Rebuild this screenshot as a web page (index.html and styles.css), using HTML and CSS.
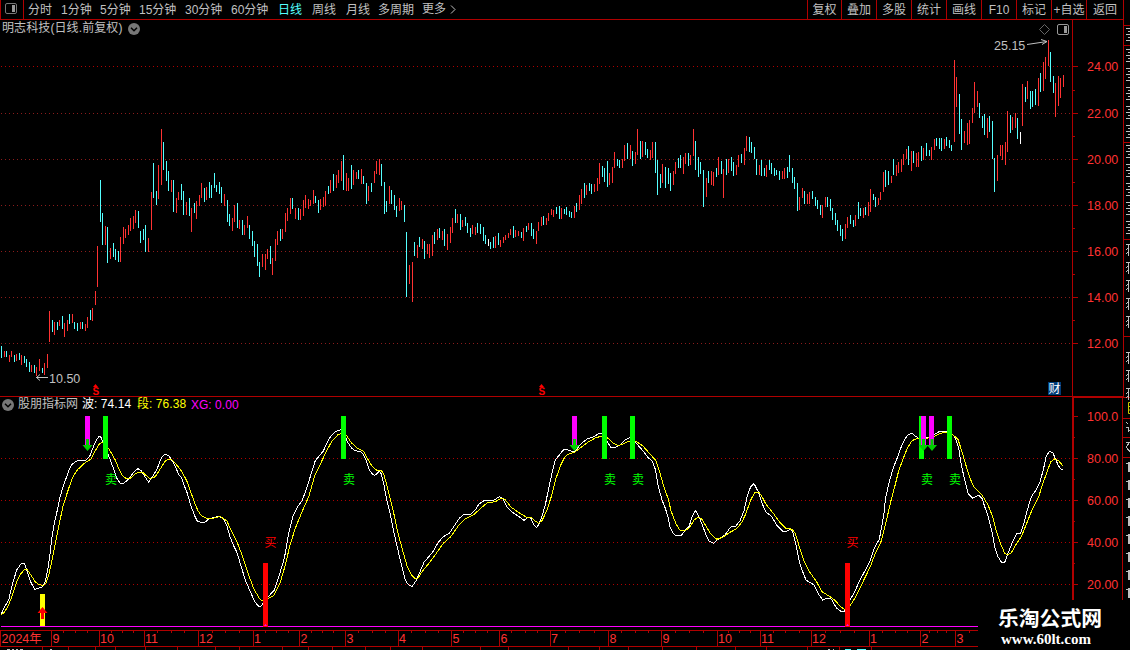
FILE: index.html
```
<!DOCTYPE html>
<html lang="zh-CN">
<head>
    <meta charset="UTF-8">
    <meta name="viewport" content="width=device-width, initial-scale=1.0">
    <title>明志科技 日线</title>
    <link rel="stylesheet" href="styles.css">
</head>
<body>
    <div class="terminal">
        <div class="workspace">
            <nav class="toolbar">
                <button class="panel-toggle" aria-label="panel">
                    <svg width="12" height="11" viewBox="0 0 12 11">
                        <rect x="0.5" y="0.5" width="11" height="10" rx="1.5" fill="none" stroke="#777"/>
                        <rect x="7" y="2" width="3" height="7" fill="#999"/>
                    </svg>
                </button>
                <div class="periods">
                    <span>分时</span>
                    <span>1分钟</span>
                    <span>5分钟</span>
                    <span>15分钟</span>
                    <span>30分钟</span>
                    <span>60分钟</span>
                    <span class="active">日线</span>
                    <span>周线</span>
                    <span>月线</span>
                    <span>多周期</span>
                    <span class="more">更多
                        <svg width="6" height="9" viewBox="0 0 6 9"><path d="M1 0.5L5 4.5L1 8.5" fill="none" stroke="#c0c0c0"/></svg>
                    </span>
                </div>
                <div class="tools">
                    <span>复权</span>
                    <span>叠加</span>
                    <span>多股</span>
                    <span>统计</span>
                    <span>画线</span>
                    <span>F10</span>
                    <span>标记</span>
                    <span>+自选</span>
                    <span>返回</span>
                </div>
            </nav>

            <!-- Price pane -->
            <section class="pane price-pane">
                <div class="pane-title">
                    <span class="stock-name">明志科技(日线.前复权)</span>
                    <svg class="chevron" width="12" height="12" viewBox="0 0 12 12">
                        <circle cx="6" cy="6" r="6" fill="#777"/>
                        <path d="M3 4.8L6 7.8L9 4.8" fill="none" stroke="#000" stroke-width="1.5"/>
                    </svg>
                </div>
                <svg class="chart" width="1123" height="376" viewBox="0 20 1123 376">
                    <g class="grid dim">
                        <path class="bright" d="M1 66.5H1070"/>
                        <path d="M1 113.5H1070M1 159.5H1070M1 205.5H1070M1 251.5H1070M1 297.5H1070M1 343.5H1070"/>
                    </g>
                    <path class="axis" d="M1072.5 20V396M1073 66.5H1078M1073 113.5H1078M1073 159.5H1078M1073 205.5H1078M1073 251.5H1078M1073 297.5H1078M1073 343.5H1078M1073 90.5H1075M1073 136.5H1075M1073 182.5H1075M1073 228.5H1075M1073 274.5H1075M1073 320.5H1075"/>
                    <g class="axis-label">
                        <text x="1087" y="71">24.00</text>
                        <text x="1087" y="118">22.00</text>
                        <text x="1087" y="164">20.00</text>
                        <text x="1087" y="210">18.00</text>
                        <text x="1087" y="256">16.00</text>
                        <text x="1087" y="302">14.00</text>
                        <text x="1087" y="348">12.00</text>
                    </g>
                    <path id="bars-up" class="bar up"/>
                    <path id="bars-down" class="bar down"/>
                    <path id="bars-flat" class="bar flat"/>

                    <!-- High / low marks -->
                    <text class="mark" x="994" y="50">25.15</text>
                    <path class="arrow" d="M1027 44.5L1047 41.5M1041 39.5L1047 41.5L1042 44.5"/>
                    <text class="mark" x="49" y="383">10.50</text>
                    <path class="arrow" d="M36 377.5H48M40 374.5L36.5 377.5L40 380.5"/>

                    <path d="M1044.5 24.5L1049.5 29.5L1044.5 34.5L1039.5 29.5Z" fill="none" stroke="#666"/>
                    <rect x="1057.5" y="24.5" width="11" height="10" rx="1.5" fill="none" stroke="#999"/>
                    <rect x="1064" y="26" width="3" height="7" fill="#999"/>

                    <g class="dividend">
                        <path d="M93 387L95.5 384L98 387Z"/>
                        <text x="92.5" y="394.5">S</text>
                        <path d="M539 387L541.5 384L544 387Z"/>
                        <text x="538.5" y="394.5">S</text>
                    </g>
                    <rect x="1048" y="382" width="13" height="13" fill="#003c78"/>
                    <text class="badge" x="1048.5" y="393">财</text>
                </svg>
            </section>

            <!-- Indicator pane -->
            <section class="pane indicator-pane">
                <div class="pane-title">
                    <svg class="chevron" width="12" height="12" viewBox="0 0 12 12">
                        <circle cx="6" cy="6" r="6" fill="#777"/>
                        <path d="M3 4.8L6 7.8L9 4.8" fill="none" stroke="#000" stroke-width="1.5"/>
                    </svg>
                    <span class="ind-name">股朋指标网</span>
                    <span class="ind-wave">波: <b>74.14</b></span>
                    <span class="ind-seg">段: <b>76.38</b></span>
                    <span class="ind-xg">XG: <b>0.00</b></span>
                </div>
                <svg class="chart" width="1123" height="254" viewBox="0 396 1123 254">
                    <g class="grid">
                        <path d="M1 458.5H1070M1 500.5H1070M1 542.5H1070M1 584.5H1070"/>
                    </g>
                    <path class="axis" d="M0 396.5H1123M1073 416.5H1078M1073 458.5H1078M1073 500.5H1078M1073 542.5H1078M1073 584.5H1078M1073 437.5H1075M1073 479.5H1075M1073 521.5H1075M1073 563.5H1075"/>
                    <path class="axis heavy" d="M1073 600V397H1123V600"/>
                    <g class="axis-label">
                        <text x="1087" y="421">100.0</text>
                        <text x="1087" y="463">80.00</text>
                        <text x="1087" y="505">60.00</text>
                        <text x="1087" y="547">40.00</text>
                        <text x="1087" y="589">20.00</text>
                    </g>

                    <path class="base" d="M1 626.5H980"/>

                    <polyline class="line wave" points="1.3,614 4,608 8.7,600 12.7,583 16.7,570 20.7,564.3 22.7,563.3 24.7,563.7 26.7,570 30.7,582 34.7,589.3 37.3,588.7 42.7,586.7 45.3,581.7 48,568 50,554 52,537 54.3,523 56.7,513 60,497 64,484 68.7,471 72,464.3 76,461.3 80,460.3 86,460.3 90,455.7 93.3,447 96.7,439.3 99,436.7 100.7,436.7 103.3,442.7 110,459.3 114,470 116.7,478 120,483 122.7,483.7 126.7,481 130.7,476.3 134.7,471 138,468.7 141.3,470.7 145.3,477.3 148.7,482.3 152,477.3 156.7,470 160.7,459.3 163.3,455.3 166,454.3 169.3,456.3 172.7,461.7 176,468.3 179.3,475.7 181.3,477.3 184,485 187.3,493.3 190.7,505 194.7,516 197.3,521 201.3,522.7 204.7,522.3 209.3,518.7 213.3,517.7 219.3,516 223.3,519 226.7,525 230,536.7 233.3,545 237.3,553.3 240.7,565 245.3,580 250,591 254.7,601.7 259.3,607 261.3,606 266.7,598.3 270.7,594 274,590.7 280,572.7 283.3,561.7 285.3,553.3 288,536.7 290.7,525 293.3,515 297.3,507.3 302,501 306.7,488.3 311.3,473.3 315.3,460.7 318.7,456.7 323.3,451 329.3,438.3 334,432.7 338.7,430.3 342.7,429.3 344,432.7 347.3,441.7 351.3,447.7 354.7,450.7 360,451.3 362.7,453.3 366,460 369.3,470 372.7,474.3 374.7,475.3 376.7,474 379.3,471 381.3,474 384,485 386.7,500 390,513.3 392.7,526.7 396,541.7 398.7,553.3 402,566.7 405.3,580 407.3,583.7 412,586.7 416,580.7 420,571.7 424,562.3 428,557.7 433.3,551.3 438,542.7 443.3,536.7 449.3,533.3 454.7,525.3 459.3,518.3 463.3,514.7 470.7,514 474.7,510.7 479.3,503.7 484,500.7 492,500.7 495.3,499.3 499.3,496.7 502.7,498.7 507.3,507.3 512,512 518,516 524,520.3 528,517.3 530.7,518 534,524.7 536.3,527.7 538.7,524.7 542,516 545.3,505 548.7,488.3 552,473.3 555.3,460 559.3,455 563.3,450 566,449.3 572,451.3 575.3,451.3 580.7,444 587.3,439 593.3,437 599.3,433.3 602.7,433.7 607.3,441.7 610.7,447.3 615.3,447.3 620.7,444.7 624.7,440.3 630,437.3 634,440.7 638.7,446 644,452 648,457.7 652,460.7 655.3,469.3 658,485 662,500 665.3,508.3 668,516.7 670,526.7 673.3,533.3 676,535.7 680.7,536 684.7,531 689.3,526 692,516.7 695.3,510.3 698.7,516 702,524 706,535 709.3,541.3 714,543.3 718,539.3 724.7,535.3 730.7,527 736,526 740,520.7 744,510.7 747.3,496 750.7,486.7 754,483.7 758,491.3 762,503.3 766,512 771.3,516 777.3,526 783.3,532 786.7,531.3 790,529.3 792.7,531.3 796,545 799.3,561.7 802,570 806,580 814,585 818.7,594.3 822.7,600 826.7,598.3 831.3,599 836.7,608.3 842,612 845.3,610.7 850,600 854.7,591.7 860,580 869.3,562.7 874.7,547.3 879.3,539.3 882,525 884,513.3 885.3,500 888,486.7 890.7,476.7 894,466 898,456 901.3,446.7 905.3,438.3 908.7,434.3 912,433.3 915.3,436 920,439.3 930,437.3 934.7,434 940,431.3 946.7,431.3 951.3,433.3 955.3,437.7 958.7,448.3 961.3,465 964.7,480 968,493.3 972.7,498.3 978.7,495.3 982,498.3 985.3,508.3 988.7,518.3 992,531.7 994.7,546.7 998,556.7 1002,563 1004.7,562.3 1008,553.3 1012.7,541.7 1016.7,533.7 1020.7,533.3 1024,523.3 1027.3,510 1031.3,496.7 1036,490 1040,481.7 1043.3,470 1046,456.7 1049.3,451.3 1052.7,452.7 1055.3,458.3 1058,465 1060.7,469 1062.7,469.7"/>
                    <polyline class="line segment" points="1.3,614.3 4,612.7 8.7,605 12.7,594 16.7,581.7 20.7,574 24,570 27.3,569.7 32,576.7 35.3,582 39.3,584.7 43.3,585.3 46,583.3 49.3,572.7 52.7,556.7 56,540 59.3,523.3 63.3,505 68.7,488.3 72.7,477.3 77.3,470 82.7,464.7 87.3,461.3 90.7,459.3 94.7,451.7 99.3,444 102.7,442 105.3,443.3 110.7,452 115.3,460 119.3,470 122.7,476 126.7,478.7 130.7,478 134.7,474.3 138.7,472.3 142.7,472.3 146.7,476 150,478.7 155.3,476.7 160,469.3 164.7,461.7 168,459 172,459.7 176.7,465 181.3,470.7 186.7,480.7 190.7,491.7 194.7,503.3 198,510.7 201.3,515.7 206.7,518.3 212,518.7 220,516.3 226.7,520.7 231.3,530.7 237.3,542.7 242.7,556.7 248,573.3 254,589.3 260,599.3 263.3,601.3 266.7,599 273.3,596 276.7,590 280,583.3 285.3,565 290,545 295.3,528.3 302,511.7 308.7,496.7 314.7,476 320.7,463.3 326.7,450.7 332,441 338,434.7 343.3,433 346.7,435.7 351.3,442.7 356.7,447.7 363.3,451 367.3,458.3 372,466 376.7,470.3 381.3,470.3 384,474.7 388,490 392.7,508.3 397.3,530 402,548.3 407.3,566.7 412,575.7 415.3,578.7 418,578 422.7,570.7 428.7,563.7 435.3,554.7 443.3,543.3 450.7,536.7 458.7,525.3 465.3,518.7 473.3,515 480.7,508.3 487.3,502.7 495.3,501.7 501.3,498.3 504.7,499.3 511.3,507.3 520,513.3 526,517 531.3,517.3 535.3,521 538.7,523.3 542,520.7 546.7,510.7 551.3,496.7 556,478.3 560.7,465 564.7,457.3 567.3,454.7 574.7,452 581.3,447.3 588.7,441.7 595.3,438 602.7,435.7 608,438.3 613.3,443.3 618,445.7 623.3,444 628.7,441 635.3,441 642.7,445.7 649.3,453.3 656,460.7 659.3,470.7 663.3,485 668,498.3 671.3,511.7 676,524 680,530.3 684,531 689.3,528 694,520 698,517.3 701.3,518.3 706,526 710.7,534 716.7,539.3 722.7,537.3 730,532.3 736.7,528.7 742,522 746,513.3 750.7,500 754.7,492.7 758.7,492 762,496.7 766,504.3 773.3,513.3 780,522.7 785.3,528 792,529.3 795.3,533.3 799.3,546.7 804.7,562.7 809.3,571.7 816,580.7 822,591.7 830,596.7 835.3,600.7 840.7,606.7 844.7,609.7 850,606 856.7,595 863.3,581 870,567.3 875.3,553.3 880.7,542.7 884,530 887.3,516.7 890.7,501.7 894.7,486.7 898.7,470.7 903.3,458.3 907.3,448.3 912,440.7 917.3,438.3 927.3,438.3 934.7,436 943.3,432.3 951.3,433.3 958,439.3 962,451.7 965.3,463.3 970,478.3 974,487.3 982,495 988,505 992.7,516.7 996,530 1000.7,544 1004.7,553.3 1008,554.7 1011.3,552.7 1016.7,543.3 1021.3,536.7 1026.7,523.3 1032,510 1038.7,496.7 1042.7,484 1046.7,472.7 1050.7,462 1054.7,458.7 1058.7,460.7 1062.7,465.7"/>

                    <!-- Signal columns -->
                    <path fill="#ff0" d="M40 594h5v32h-5z"/>
                    <path fill="#f00" d="M263 563h5v64h-5zM845 563h5v64h-5z"/>
                    <path fill="#0f0" d="M103 416h5v43h-5zM341 416h5v43h-5zM602 416h5v43h-5zM630 416h5v43h-5zM919 416h5v43h-5zM947 416h5v43h-5z"/>
                    <path fill="#f0f" d="M85 416h5v29h-5zM572 416h5v29h-5zM921 416h5v29h-5zM929 416h5v29h-5z"/>
                    <path fill="#f0f" d="M264 626l1.5-2 1.5 2zM846 626l1.5-2 1.5 2z"/>
                    <path fill="#f00" d="M42.5 607l5 6h-3.500v6h-3v-6h-3.500z"/>
                    <g fill="#00d000">
                        <path d="M86 439h3v6h3.500l-5 6-5-6H86z"/>
                        <path d="M573 439h3v6h3.500l-5 6-5-6H573z"/>
                        <path d="M922 439h3v6h3.500l-5 6-5-6H922z"/>
                        <path d="M930.500 439h3v6h3.500l-5 6-5-6H930.500z"/>
                    </g>
                    <g class="signal sell">
                        <text x="105" y="484">卖</text>
                        <text x="343" y="484">卖</text>
                        <text x="604" y="484">卖</text>
                        <text x="632" y="484">卖</text>
                        <text x="921" y="484">卖</text>
                        <text x="949" y="484">卖</text>
                    </g>
                    <g class="signal buy">
                        <text x="264.500" y="547">买</text>
                        <text x="846.500" y="547">买</text>
                    </g>

                    <!-- Time axis -->
                    <path class="axis" d="M0 630.5H980M0 646.5H980M0.5 630V646"/>
                    <path class="axis" d="M51.5 630V646M99.5 630V646M144.5 630V646M198.5 630V646M253.5 630V646M299.5 630V646M345.5 630V646M398.5 630V646M451.5 630V646M499.5 630V646M550.5 630V646M608.5 630V646M661.5 630V646M717.5 630V646M760.5 630V646M811.5 630V646M869.5 630V646M920.5 630V646M955.5 630V646"/>
                    <path id="month-ticks" class="axis"/>
                    <g class="axis-label month">
                        <text x="1.5" y="643">2024年</text>
                        <text x="52.5" y="643">9</text>
                        <text x="100" y="643">10</text>
                        <text x="145" y="643">11</text>
                        <text x="199" y="643">12</text>
                        <text x="254" y="643">1</text>
                        <text x="300.5" y="643">2</text>
                        <text x="346.5" y="643">3</text>
                        <text x="399" y="643">4</text>
                        <text x="452.5" y="643">5</text>
                        <text x="500.5" y="643">6</text>
                        <text x="551" y="643">7</text>
                        <text x="609.5" y="643">8</text>
                        <text x="662.5" y="643">9</text>
                        <text x="718" y="643">10</text>
                        <text x="761" y="643">11</text>
                        <text x="812" y="643">12</text>
                        <text x="870" y="643">1</text>
                        <text x="921.5" y="643">2</text>
                        <text x="956.5" y="643">3</text>
                    </g>
                    <path class="cut" d="M7 649.5h3M12 649.5h2M16 649.5h2M20 649.5h3M50 649.5h2M828 649.5h2M833 649.5h1"/>
                    <path class="cut cyan" d="M845 649.5h6M857 649.5h9"/>
                </svg>
            </section>
        </div>

        <!-- Edge of the quote panel -->
        <aside class="quote-edge">
            <svg width="7" height="650" viewBox="0 0 7 650">
                <path class="axis" d="M0.5 0V397M0 25.5H7M0 45.5H7M0 142.5H7M0 239.5H7M0 336.5H7M0 397.5H7M0 418.5H7M0 437.5H7M0 457.5H7"/>
                <path id="edge-glyphs" class="glyphs"/>
                <path d="M7 402.5H5.5V413.5H7M5 406.5H7M5 410H7" fill="none" stroke="#c8c800"/>
            </svg>
        </aside>

        <div class="site-mark">
            <div class="site-name">乐淘公式网</div>
            <div class="site-url">www.60lt.com</div>
        </div>
    </div>

    <script src="chart.js"></script>
</body>
</html>
```
FILE: styles.css
```
:root {
    --bg: #000;
    --frame: #b00000;
    --text: #c0c0c0;
    --up: #ff3232;
    --down: #54ffff;
    --ui-font: "Liberation Sans", "Noto Sans CJK SC", sans-serif;
}

* {
    margin: 0;
    padding: 0;
    box-sizing: border-box;
}

body {
    background: var(--bg);
    color: var(--text);
    font-family: var(--ui-font);
    font-size: 12px;
    overflow: hidden;
}

svg {
    display: block;
}

.terminal {
    position: relative;
    display: flex;
    width: 1130px;
    height: 650px;
}

.workspace {
    width: 1123px;
}

/* Toolbar */
.toolbar {
    display: flex;
    height: 20px;
    line-height: 20px;
    border-bottom: 1px solid var(--frame);
    white-space: nowrap;
}

.panel-toggle {
    display: flex;
    width: 24px;
    padding: 3px 0 0 4px;
    background: none;
    border: solid var(--frame);
    border-width: 0 1px;
}

.periods {
    flex: 1;
    display: grid;
    grid-template-columns: 33px 39px 39px 46px 46px 47px 34px 34px 32px 44px 40px;
    padding-left: 4px;
}

.periods .active {
    color: var(--down);
}

.periods .more {
    display: flex;
    align-items: center;
    gap: 4px;
    height: 18px;
}

.tools {
    display: grid;
    grid-template-columns: 34px 35px 35px 35px 35px 35px 35px 35px 37px;
}

.tools span {
    height: 19px;
    border-left: 1px solid var(--frame);
    text-align: center;
}

/* Panes */
.pane {
    position: relative;
}

.pane-title {
    position: absolute;
    top: 0;
    left: 2px;
    display: flex;
    align-items: center;
    height: 18px;
    white-space: nowrap;
}

.pane-title span {
    height: 18px;
    line-height: 16px;
}

.price-pane .pane-title {
    gap: 5px;
}

.stock-name {
    width: 121px;
    letter-spacing: 0.1px;
}

.indicator-pane .pane-title {
    gap: 4px;
}

.pane-title b {
    font-weight: normal;
    letter-spacing: 0.1px;
}

.ind-name {
    width: 60px;
}

.ind-wave {
    width: 51px;
    color: #fff;
}

.ind-seg {
    width: 50px;
    color: #ff0;
}

.pane-title .ind-xg {
    color: #f0f;
    line-height: 18px;
}

/* Chart */
.grid path {
    stroke: #b00000;
    stroke-dasharray: 1 3;
    shape-rendering: crispEdges;
}

.grid.dim path {
    stroke: #8c1c1c;
}

.grid.dim .bright {
    stroke: #b00000;
}

.axis {
    fill: none;
    stroke: var(--frame);
    shape-rendering: crispEdges;
}

.axis.heavy {
    stroke-width: 2;
}

.axis-label {
    fill: var(--up);
    font-size: 12.5px;
}

.bar {
    fill: none;
    shape-rendering: crispEdges;
}

.up {
    stroke: var(--up);
}

.down {
    stroke: var(--down);
}

.flat {
    stroke: #fff;
}

.mark {
    fill: var(--text);
    font-size: 12.5px;
}

.arrow {
    fill: none;
    stroke: var(--text);
}

.dividend {
    fill: #f00;
    font-size: 10px;
    font-weight: bold;
}

.price-pane .chart {
    overflow: visible;
}

.badge {
    fill: #fff;
    font-size: 12px;
}

.base {
    stroke: #f0f;
    shape-rendering: crispEdges;
}

.line {
    fill: none;
    shape-rendering: crispEdges;
}

.wave {
    stroke: #fff;
}

.segment {
    stroke: #ff0;
}

.signal {
    font-size: 12px;
}

.sell {
    fill: #0f0;
}

.buy {
    fill: #f00;
}

.cut {
    stroke: var(--text);
}

.cut.cyan {
    stroke: var(--down);
}

/* Right edge */
.quote-edge {
    width: 7px;
    overflow: hidden;
}

.glyphs {
    fill: none;
    stroke: var(--text);
    shape-rendering: crispEdges;
}

/* Site mark */
.site-mark {
    position: absolute;
    right: 0;
    bottom: 0;
    width: 152px;
    height: 50px;
    padding: 6px 0 0 20px;
    background: #000;
    color: #fff;
    white-space: nowrap;
}

.site-name {
    font: bold 20.8px/22px "Noto Sans CJK SC", sans-serif;
}

.site-url {
    padding: 2px 0 0 3px;
    font: bold 15px/18px "Liberation Serif", serif;
}
```
FILE: chart.js
```
// u = up, d = down, f = flat; then x, high and low in chart units
const bars = `
d1,346,358 u4,351,357 d6,351,357 u9,355,362 u11,351,357 d14,355,362 u16,354,361 d19,353,360 u21,355,365 d24,356,363
d26,359,367 d29,362,372 u31,365,372 d34,365,373 u36,367,376 u39,359,371 d42,368,373 u44,363,375 u47,354,368 u49,311,342
d52,320,332 u54,322,335 d57,322,330 u59,320,326 d62,316,329 u64,323,337 u67,320,331 d69,314,324 u72,314,323 d74,322,329
d77,323,331 u80,322,329 d82,322,329 u85,324,331 u87,317,328 d90,310,320 u92,308,321 u95,291,305 u97,246,287 d100,180,222
d102,213,245 u105,226,245 d107,227,263 u110,248,259 d113,243,257 d115,249,260 d118,251,262 u120,237,262 u123,227,244 u125,229,238
u128,225,235 u130,218,231 u133,216,229 u135,210,223 d138,211,228 d140,231,243 d143,229,240 d145,225,252 u148,238,252 u151,192,230
d153,163,198 d156,191,205 u158,165,199 u161,129,185 d163,142,170 d166,161,181 d168,171,191 u171,180,192 d173,180,212 u176,198,213
u178,192,200 d181,184,200 d183,191,215 u186,202,215 d189,198,216 u191,208,232 d194,203,213 u196,201,219 u199,195,206 u201,183,198
d204,188,202 u206,187,200 d209,182,198 d211,185,198 d214,173,188 d216,185,192 d219,182,194 d221,187,203 u224,194,206 d227,200,222
d229,214,226 u232,218,231 u234,205,222 d237,203,228 u239,220,229 d242,220,235 u244,225,235 u247,216,228 d249,225,239 d252,231,246
d254,241,257 d257,244,266 d259,262,277 u262,254,267 u265,254,270 u267,249,259 d270,246,264 u272,258,275 u275,239,261 u277,231,245
d280,229,241 u282,229,239 u285,213,232 u287,208,221 u290,198,214 d292,198,209 u295,208,219 d298,208,220 u300,209,220 u303,200,216
u305,195,208 u308,199,209 u310,200,206 u313,190,204 d315,196,203 d318,200,213 u320,199,210 u323,197,207 u325,191,206 d328,186,194
u330,180,193 d333,174,191 u336,175,188 u338,170,183 u341,161,181 d343,155,190 u346,173,191 u348,178,191 d351,165,189 u353,170,185
u356,172,179 d358,170,179 u361,169,184 d363,176,184 d366,183,204 u368,186,201 d371,183,192 u374,171,183 u376,161,174 u379,159,175
d381,164,186 d384,182,214 d386,201,212 u389,186,204 d391,190,204 d394,195,210 d396,206,217 u399,198,211 u401,201,210 d404,205,222
d406,232,297 u409,265,284 u412,262,302 d414,242,256 u417,245,258 d419,237,247 u422,239,249 d424,241,259 u427,244,254 u429,244,258
u432,235,256 d434,232,244 u437,229,240 d439,228,238 u442,231,240 d444,229,246 u447,234,250 u450,227,243 u452,218,233 d455,209,223
u457,214,223 d460,214,230 u462,220,227 d465,217,226 d467,223,233 d470,228,237 u472,225,234 u475,227,235 d477,223,233 d480,224,234
d483,227,241 d485,235,244 f488,239,246 d490,242,249 d493,237,248 u495,236,248 d498,233,245 u500,240,247 u503,237,243 u505,235,240
u508,233,238 u510,229,235 d513,226,238 u515,230,237 u518,231,236 d521,232,238 u523,228,241 d526,226,232 u528,223,230 d531,223,236
d533,229,239 u536,231,244 u538,222,231 u541,217,226 d543,216,225 u546,218,225 u548,213,221 u551,209,215 u553,210,217 d556,207,214
d559,206,219 u561,208,219 d564,209,214 d566,207,215 d569,211,217 d571,212,218 u574,206,218 d576,203,212 u579,195,210 u581,189,204
d584,183,198 u586,185,195 d589,183,191 d591,184,194 u594,184,192 u597,178,191 u599,163,184 d602,166,177 d604,168,182 d607,161,187
u609,173,185 u612,167,183 u614,152,168 d617,159,166 d619,160,168 u622,159,168 u624,145,161 d627,143,159 u630,145,159 d632,151,166
u635,152,164 u637,129,155 d640,141,159 u642,141,157 d645,142,155 d647,149,158 u650,150,160 u652,142,158 d655,142,173 d657,160,195
d660,174,188 u662,164,183 d665,167,188 d668,168,184 d670,173,191 u673,171,185 u675,162,174 d678,158,168 d680,155,168 u683,157,174
u685,153,164 d688,153,166 u690,155,165 u693,129,156 d695,141,170 d698,157,177 d700,162,174 d703,170,207 u706,178,197 d708,171,183
u711,171,185 u713,172,186 d716,168,177 u718,157,175 d721,161,174 u723,169,198 d726,159,175 u728,159,173 d731,157,171 d733,162,176
u736,165,175 u738,155,167 d741,154,163 u744,148,165 u746,136,151 d749,137,152 d751,142,153 d754,147,159 d756,159,175 u759,165,175
d761,160,176 d764,168,176 u766,165,177 d769,160,170 d771,163,174 d774,168,176 d776,170,175 d779,171,180 u782,171,179 u784,168,179
d787,167,178 d789,155,172 d792,168,183 d794,177,189 d797,183,211 u799,197,210 u802,188,198 d804,191,204 u807,194,204 u809,192,204
d812,191,199 d815,197,206 d817,200,209 d820,205,215 u822,205,218 u825,197,207 d827,197,207 d830,199,211 d832,208,220 d835,213,225
d837,220,231 d840,225,236 d842,229,241 u845,224,239 u847,217,228 d850,215,224 d853,220,227 u855,215,226 d858,202,219 d860,208,216
u863,208,218 d865,207,215 u868,202,216 u870,189,212 d873,194,200 d875,197,207 u878,198,205 u880,192,200 u883,172,192 d885,170,187
d888,171,185 u891,176,183 d893,159,175 u896,165,176 u898,162,173 u901,159,172 u903,154,165 u906,149,159 d908,146,165 u911,151,171
d913,151,163 u916,153,167 u918,152,167 d921,146,161 u923,148,160 d926,143,156 d929,150,156 u931,147,160 u934,139,150 d936,138,146
d939,138,149 d941,138,151 u944,139,149 d946,137,146 d949,140,148 d951,145,151 u954,60,142 u956,77,107 d959,94,134 d961,119,150
u964,131,143 u967,123,145 u969,120,144 u972,108,123 u974,82,113 u977,91,107 d979,103,118 d982,116,128 d984,114,135 u987,118,138
d989,116,132 d992,121,159 d994,158,192 u997,155,181 u1000,145,156 u1002,145,160 u1005,142,165 u1007,111,152 d1010,115,133 u1012,117,130
u1015,113,128 d1017,118,139 f1020,132,144 u1022,84,126 d1025,87,102 u1027,81,99 d1030,91,109 d1032,91,107 d1035,89,105 u1038,78,106
d1040,73,92 u1043,62,91 u1045,57,79 u1048,40,66 d1050,52,82 d1053,76,93 u1055,83,117 u1058,76,106 u1060,78,98 u1063,75,87
`.trim().split(/\s+/);

function barPath(kind) {
    return bars
        .filter(bar => bar[0] === kind)
        .map(bar => {
            const [x, high, low] = bar.slice(1).split(',').map(Number);
            return `M${x + 0.5} ${high}V${low}`;
        })
        .join('');
}

document.getElementById('bars-up').setAttribute('d', barPath('u'));
document.getElementById('bars-down').setAttribute('d', barPath('d'));
document.getElementById('bars-flat').setAttribute('d', barPath('f'));

// Week ticks under the time axis line
const weeks = [
    63, 75, 87, 111, 122, 133, 157, 171, 184, 212, 225, 239, 265, 276, 288, 311, 322, 333, 358, 372, 385,
    411, 425, 438, 463, 475, 487, 511, 525, 537, 565, 579, 594, 621, 635, 648, 675, 689, 703, 728, 739, 750,
    773, 785, 799, 825, 840, 854, 882, 895, 907, 929, 937, 946, 969
];
const lowerTicks = [42, 68, 95, 115, 145, 177, 215, 239, 282, 308, 332, 365, 390, 422, 480, 508, 568, 599, 628, 662, 696, 735, 766, 807, 839, 871];
document.getElementById('month-ticks').setAttribute('d',
    weeks.map(x => `M${x + 0.5} 631V633`).join('') +
    lowerTicks.map(x => `M${x + 0.5} 647V650`).join(''));

// Strokes of the quote panel that reach into the visible edge
let glyphs = '';
[[28, 43], [49, 140], [145, 237]].forEach(([from, to]) => {
    for (let y = from; y < to; y += 19) {
        for (let i = 0; i < 5 && y + i * 3 < to; i++) {
            glyphs += `M${i % 2 ? 5 : 3} ${y + i * 3 + 0.5}H7`;
        }
    }
});
for (let y = 244; y < 395; y += 18) {
    if (y > 325 && y < 340) continue;
    glyphs += `M3 ${y + 0.5}H7M5.5 ${y}V${y + 12}M3 ${y + 6}L6 ${y + 3}M3 ${y + 10}L6 ${y + 7}`;
}
glyphs += 'M3 422L5 424M3 427H5V432L7 430M3 442H7M6 443L3 448M4 448L7 452';
for (let y = 462; y < 600; y += 18) {
    glyphs += `M3 ${y + 1.5}H7M5.5 ${y}V${y + 10}M6.5 ${y}V${y + 10}`;
}
document.getElementById('edge-glyphs').setAttribute('d', glyphs);
```
